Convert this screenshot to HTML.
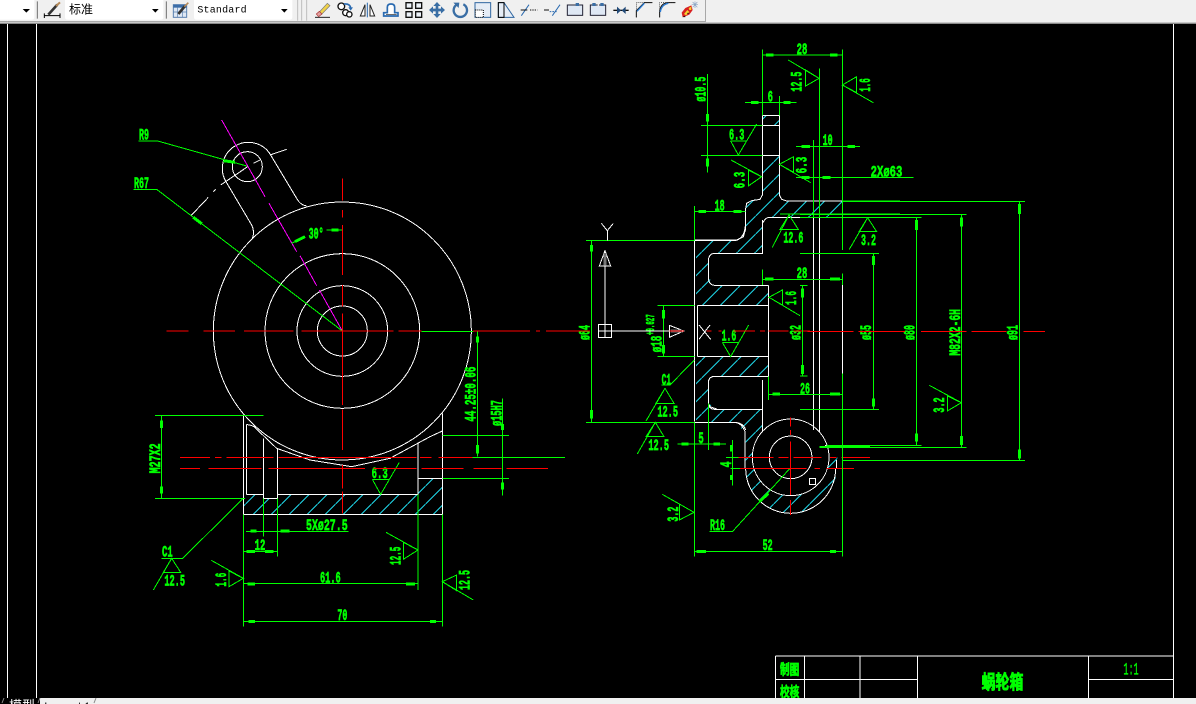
<!DOCTYPE html>
<html><head><meta charset="utf-8"><style>
html,body{margin:0;padding:0;background:#000;width:1196px;height:704px;overflow:hidden}
svg{display:block;position:absolute;left:0;top:0}
.w,.g,.r,.m,.a{fill:none;stroke-width:3;shape-rendering:crispEdges}
.w{stroke:#fff}.g{stroke:#0f0}.r{stroke:#f00}.m{stroke:#f0f}
.a{stroke:#0f0;stroke-width:9}
text{font-family:"Liberation Mono","Noto Sans CJK SC",monospace;font-weight:bold;font-size:46px;fill:#0f0;stroke:#0f0;stroke-width:2}
.cj{font-family:"Liberation Sans","Noto Sans CJK SC",sans-serif}
.ui{font-weight:normal;fill:#000;stroke:none}
</style></head><body>
<svg width="1196" height="704" viewBox="0 0 1196 704" xmlns="http://www.w3.org/2000/svg">
<defs>
<pattern id="h1" patternUnits="userSpaceOnUse" width="18" height="18" patternTransform="translate(11.6 0)"><path d="M0 18L18 0" stroke="#1fd8ea" stroke-width="1" shape-rendering="crispEdges"/></pattern>
<pattern id="h2" patternUnits="userSpaceOnUse" width="18" height="18" patternTransform="translate(-.3 0)"><path d="M0 18L18 0" stroke="#1fd8ea" stroke-width="1" shape-rendering="crispEdges"/></pattern>
</defs>
<rect width="1196" height="704" fill="#000"/>

<!-- hatching -->
<path fill="url(#h1)" d="M243 514.3V494.3H264V498.3H277V494.3H418V478.3H442.3V514.3Z"/>
<path fill="url(#h2)" d="M762 115H779V125H762ZM762 155H779V195L782 199 787 201H842V218H767L762 223V253H715L708 262V277L715 285H768V305.7H696V241H737L745 232V210L748 203 752 201 762 195Z"/>
<path fill="url(#h2)" d="M696 356H768V376H715L708 385V403L717 409H762V432A38.3 38.3 0 1 0 829 457.3L831 446H842L836.7 460V468.3A45 45 0 0 1 745.7 468.3V432L733 422H696Z"/>

<!-- Frame -->
<path d="M7.5 24V698M36.5 24V698M1173.5 24V698" stroke="#fff" fill="none" shape-rendering="crispEdges"/>

<!-- left view, top -->
<g transform="translate(120 110) scale(.33333)">
<circle class="w" cx="667" cy="663" r="387"/>
<circle class="w" cx="667" cy="663" r="232"/>
<circle class="w" cx="667" cy="663" r="136"/>
<circle class="w" cx="667" cy="663" r="75"/>
<path class="w" d="M318 215L395 345Q405 365 397 385M318 215A78 78 0 1 1 452 135L530 265Q540 285 560 288"/>
<circle class="w" cx="382" cy="170" r="45"/>
<path class="w" d="M213 317L265 262M280 245L287 238M302 225L383 170M400 160L420 150M450 135L500 118"/>
<path class="m" d="M305 30L435 260M447 280L530 425M540 437L590 527M598 540L667 663"/>
<path class="g" d="M55 93H113L380 168M40 238H110L667 663M515 400L555 380M620 360H667M905 664H1060M1073 665V750"/>
<path class="a" d="M310 152L345 157M220 322L245 341M525 395L555 380M635 360H655M1073 680V698"/>
<text x="57" y="88" textLength="30" lengthAdjust="spacingAndGlyphs">R9</text>
<text x="42" y="234" textLength="45" lengthAdjust="spacingAndGlyphs">R67</text>
<text x="566" y="385" textLength="45" lengthAdjust="spacingAndGlyphs">30°</text>
<path class="r" d="M140 663H205M250 663H345M372 663H520M545 663H820M835 663H905M1060 663H1110M667 205V272M667 300V322M667 345V495M667 525V590M667 610V750"/>
</g>

<!-- left view, bottom -->
<g transform="translate(130 350) scale(.33333)">
<path class="w" d="M349 224Q362 224 372 230L440 295 540 330 665 350 780 325 900 260 937 243"/>
<path class="w" d="M340 195V493M349 224V433M401 265V445M442 295V445M864 280V433M937 190V493M340 493H937M442 433H864M349 433H401M401 445H442M864 385H937"/>
<path class="g" d="M75 196H400M75 445H345M95 196V445M937 256H1137M937 385H1137M1117 145V437M1043 0V320M1027 322H1305M348 544H655M340 604H442M442 445V620M401 445V560M864 433V720M340 493V830M937 493V830M340 700H864M340 814H937"/>
<path class="a" d="M95 212V234M95 410V430M1117 222V240M1117 397V418M1043 285V310M362 543H380M452 543H478M350 604H375M405 604H430M352 702H375M828 702H855M355 814H375M900 814H918"/>
<path class="g" d="M727 388H778M727 388L752 433 808 337M768 547L864 600M820 577L864 600 820 628ZM244 631L340 685M297 663L340 685 297 710ZM937 695L980 675V722ZM937 695L1030 750M340 445L158 625H95M125 625L152 667H100ZM125 625L70 720"/>
<text x="103" y="707" textLength="62" lengthAdjust="spacingAndGlyphs">12.5</text>
<text x="96" y="620" textLength="32" lengthAdjust="spacingAndGlyphs">C1</text>
<text transform="translate(90 370) rotate(-90)" textLength="90" lengthAdjust="spacingAndGlyphs">M27X2</text>
<text transform="translate(1114 228) rotate(-90)" textLength="78" lengthAdjust="spacingAndGlyphs">ø15H7</text>
<text transform="translate(1037 215) rotate(-90)" textLength="165" lengthAdjust="spacingAndGlyphs">44.25±0.06</text>
<text x="725" y="384" textLength="48" lengthAdjust="spacingAndGlyphs">6.3</text>
<text x="528" y="540" textLength="125" lengthAdjust="spacingAndGlyphs">5Xø27.5</text>
<text x="374" y="600" textLength="32" lengthAdjust="spacingAndGlyphs">12</text>
<text x="570" y="697" textLength="62" lengthAdjust="spacingAndGlyphs">61.6</text>
<text x="622" y="810" textLength="30" lengthAdjust="spacingAndGlyphs">70</text>
<text transform="translate(812 645) rotate(-90)" textLength="55" lengthAdjust="spacingAndGlyphs">12.5</text>
<text transform="translate(288 710) rotate(-90)" textLength="42" lengthAdjust="spacingAndGlyphs">1.6</text>
<text transform="translate(1018 720) rotate(-90)" textLength="60" lengthAdjust="spacingAndGlyphs">12.5</text>
<path class="r" d="M150 322H240M255 322H275M290 322H430M445 322H860M870 322H905M925 322H1027M150 355H210M235 355H395M415 355H705M730 355H860M875 355H1000M1030 355H1115M1130 355H1254M637 0V165M637 178V300M637 345V415M637 425V490"/>
</g>

<!-- right view top -->
<g transform="translate(680 40) scale(.33333)">
<path class="w" d="M247 226V465M298 226V465M247 226H298M247 256H298M247 346H298M247 465L240 478 215 482 200 490 196 510V570L190 590 170 600H43V630M298 465L305 478 320 483H487M262 533H487M247 630V550L255 538 262 533M400 533V1170M418 533V1175"/>
<path class="g" d="M247 45H487M247 28V226M487 28V630M195 187H350M298 168V226M82 102V397M63 256H247M63 346H247M418 85V533M400 300V533M348 320H540M348 412H700M43 515H196M43 498V600M487 483H660M300 522H660M487 533H660M0 602H43"/>
<path class="a" d="M258 45H280M450 45H472M213 187H235M310 187H332M82 222V245M82 355V380M365 320H390M502 320H525M365 412H388M428 412H452M55 515H78M160 515H185"/>
<path class="g" d="M152 303H200M152 303L175 345 230 252M245 410L205 390V438ZM153 360L245 410M298 373L341 350V397ZM298 373L392 428M325 60L417 115M377 90L417 115 377 138ZM487 135L530 110V158ZM487 135L580 188M327 525L355 568H300ZM327 525L277 622M563 533L590 575H537ZM563 533L508 628"/>
<text x="350" y="42" textLength="32" lengthAdjust="spacingAndGlyphs">28</text>
<text x="263" y="184" textLength="16" lengthAdjust="spacingAndGlyphs">6</text>
<text transform="translate(76 185) rotate(-90)" textLength="75" lengthAdjust="spacingAndGlyphs">ø10.5</text>
<text x="147" y="298" textLength="46" lengthAdjust="spacingAndGlyphs">6.3</text>
<text transform="translate(194 445) rotate(-90)" textLength="50" lengthAdjust="spacingAndGlyphs">6.3</text>
<text transform="translate(380 400) rotate(-90)" textLength="50" lengthAdjust="spacingAndGlyphs">6.3</text>
<text transform="translate(365 155) rotate(-90)" textLength="60" lengthAdjust="spacingAndGlyphs">12.5</text>
<text transform="translate(570 155) rotate(-90)" textLength="40" lengthAdjust="spacingAndGlyphs">1.6</text>
<text x="428" y="315" textLength="30" lengthAdjust="spacingAndGlyphs">10</text>
<text x="572" y="410" textLength="95" lengthAdjust="spacingAndGlyphs">2Xø63</text>
<text x="104" y="512" textLength="30" lengthAdjust="spacingAndGlyphs">18</text>
<text x="310" y="607" textLength="60" lengthAdjust="spacingAndGlyphs">12.6</text>
<text x="543" y="615" textLength="45" lengthAdjust="spacingAndGlyphs">3.2</text>
</g>

<!-- right view middle + UCS -->
<g transform="translate(580 220) scale(.33333)">
<path class="w" d="M343 62V605M352 257V409M343 62H460Q497 62 497 0M547 0V100H405Q385 100 385 125V170Q385 196 405 196H565M352 257H565M352 409H565M405 469H565M565 196V469M405 469Q385 469 385 490V545Q385 568 405 568H547V630M343 607H460Q490 607 497 630"/>
<path class="g" d="M343 0V62M18 62H343M18 607H343M35 62V607M232 257H343M232 409H343M250 257V409M547 148V195M547 178H700M565 469V540M565 523H690M667 196V469M567 232L607 210V255ZM567 232L660 287M427 367H477M427 367L452 410 506 315M343 420L270 495H245M255 505L282 550H228ZM255 505L198 603"/>
<path class="a" d="M35 75V95M35 570V595M250 270V295M250 375V400M555 177H580M578 522H600M667 435V460"/>
<text transform="translate(28 360) rotate(-90)" textLength="45" lengthAdjust="spacingAndGlyphs">ø64</text>
<text transform="translate(245 397) rotate(-90)" textLength="50" lengthAdjust="spacingAndGlyphs">ø18</text>
<text transform="translate(222 345) rotate(-90)" textLength="62" lengthAdjust="spacingAndGlyphs" style="font-size:36px">+0.027</text>
<text x="245" y="494" textLength="28" lengthAdjust="spacingAndGlyphs">C1</text>
<text x="232" y="590" textLength="62" lengthAdjust="spacingAndGlyphs">12.5</text>
<text x="425" y="362" textLength="44" lengthAdjust="spacingAndGlyphs">1.6</text>
<text x="650" y="174" textLength="32" lengthAdjust="spacingAndGlyphs">28</text>
<text x="660" y="520" textLength="30" lengthAdjust="spacingAndGlyphs">26</text>
<text transform="translate(648 255) rotate(-90)" textLength="42" lengthAdjust="spacingAndGlyphs">1.6</text>
<text transform="translate(662 360) rotate(-90)" textLength="45" lengthAdjust="spacingAndGlyphs">ø32</text>
<path class="r" d="M268 333H312M380 333H395M415 333H425M460 333H525M540 333H555M565 333H625M640 333H690"/>
<path class="w" d="M55 313H95V353H55ZM75 313V138M75 313V353M55 333H268M64 10L82 32 100 10M82 32V62M357 315L392 358M390 315L357 358"/>
<path class="w" d="M58 138L75 92 92 138ZM268 316L312 333 268 352Z"/>
<path d="M75 102V136" stroke="#777" stroke-width="9" fill="none"/>
<path d="M272 333H306" stroke="#777" stroke-width="9" fill="none"/>
<path class="r" d="M268 333H312"/>
</g>

<!-- worm area -->
<g transform="translate(630 380) scale(.33333)">
<path class="w" d="M193 127H310Q335 127 345 155V265M235 0V70L240 80 262 88H397M397 0V155M551 0V135M569 0V155M585 197H637M620 240V265"/>
<circle class="w" cx="482" cy="232" r="115"/>
<circle class="w" cx="482" cy="232" r="64"/>
<path class="w" d="M347 265A135 135 0 0 0 617 265"/>
<rect class="w" x="538" y="296" width="18" height="18"/>
<path class="g" d="M0 127H193M193 127V530M193 514H637M142 192H288M235 70V210M288 232H325M302 265H330M307 180V317M238 454H308L480 265M192 397L148 372V420ZM97 343L192 397M76 127L102 170H48ZM76 127L22 222M637 0V60M637 170V530M568 200H720M637 242H720"/>
<path class="a" d="M200 514H228M600 514H618M155 192H175M250 192H270M305 195V215M305 285V300M388 365L415 340"/>
<text x="55" y="210" textLength="62" lengthAdjust="spacingAndGlyphs">12.5</text>
<text x="205" y="189" textLength="16" lengthAdjust="spacingAndGlyphs">5</text>
<text transform="translate(303 262) rotate(-90)" textLength="18" lengthAdjust="spacingAndGlyphs">4</text>
<text x="240" y="450" textLength="45" lengthAdjust="spacingAndGlyphs">R16</text>
<text transform="translate(144 425) rotate(-90)" textLength="45" lengthAdjust="spacingAndGlyphs">3.2</text>
<text x="398" y="510" textLength="30" lengthAdjust="spacingAndGlyphs">52</text>
<path class="r" d="M325 232H430M445 232H475M490 232H575M600 232H620M635 232H720M330 265H530M553 265H570M590 265H672M482 112V140M482 150V165M482 185V345M482 360V405"/>
</g>

<!-- right dims -->
<g transform="translate(800 190) scale(.33333)">
<path class="w" d="M128 282V550"/>
<path class="g" d="M127 0V34M127 34H675M0 73H500M0 82H365M658 34V811M127 811H675M484 73V772M58 772H500M349 82V766M80 766H365M0 190H237M0 658H237M220 190V658M0 268H127M127 250V285M0 613H127M127 550V870M7 286V560M0 286H23M0 558H23M484 638L442 618V663ZM388 586L484 638"/>
<path class="a" d="M658 42V72M658 778V805M484 82V110M484 738V765M349 90V120M349 730V755M220 198V225M220 625V650M90 267H120M90 612H120M7 295V322M7 525V552"/>
<text transform="translate(213 450) rotate(-90)" textLength="45" lengthAdjust="spacingAndGlyphs">ø55</text>
<text transform="translate(343 450) rotate(-90)" textLength="45" lengthAdjust="spacingAndGlyphs">ø80</text>
<text transform="translate(480 497) rotate(-90)" textLength="140" lengthAdjust="spacingAndGlyphs">M82X2-6H</text>
<text transform="translate(652 450) rotate(-90)" textLength="45" lengthAdjust="spacingAndGlyphs">ø91</text>
<text transform="translate(432 668) rotate(-90)" textLength="46" lengthAdjust="spacingAndGlyphs">3.2</text>
<path class="r" d="M22 424H160M175 424H315M363 424H500M515 424H620M670 424H735"/>
</g>

<!-- extended centerline between views -->
<path d="M473 331H530M536 331H540M546 331H590" stroke="#f00" stroke-width="1" fill="none" shape-rendering="crispEdges"/>

<!-- title block -->
<g transform="translate(760 640) scale(.33333)">
<path class="w" d="M46 48H1240M46 118H472M985 118H1240M46 48V174M133 48V174M300 48V174M472 48V174M985 48V174"/>
<text class="cj" transform="translate(60 104) scale(1 1.45)" style="font-size:29px;stroke-width:1.5" textLength="58" lengthAdjust="spacingAndGlyphs">制图</text>
<text class="cj" transform="translate(60 171) scale(1 1.45)" style="font-size:29px;stroke-width:1.5" textLength="58" lengthAdjust="spacingAndGlyphs">校核</text>
<text class="cj" transform="translate(665 145) scale(1 1.35)" style="font-size:42px;stroke-width:2" textLength="125" lengthAdjust="spacingAndGlyphs">蜗轮箱</text>
<text x="1090" y="103" textLength="46" lengthAdjust="spacingAndGlyphs" style="font-size:52px;font-weight:normal;stroke-width:1">1:1</text>
</g>

<!-- bottom tabs -->
<rect x="0" y="698" width="1196" height="6" fill="#f0f0f0"/>
<rect x="0" y="698" width="40" height="6" fill="#000"/>
<path d="M2 703L4 698M38 703L40 698M94 703L96 698" stroke="#888" fill="none"/>
<text class="cj ui" x="9" y="710" style="font-size:13px;fill:#fff">模型</text>
<text class="ui" x="44" y="710" style="font-size:11px">Layout1</text>

<!-- toolbar -->
<rect x="0" y="0" width="1196" height="24" fill="#f0f0f0"/>
<rect x="0" y="23" width="1196" height="1" fill="#8a8a8a"/>
<rect x="0" y="22" width="1196" height="1" fill="#c8c8c8"/>
<rect x="0" y="21" width="705" height="1" fill="#a8a8a8"/>
<rect x="705" y="0" width="1" height="22" fill="#a8a8a8"/>
<g transform="scale(.33333)">
<rect x="-6" y="-6" width="109" height="65" rx="7" fill="#fff"/>
<rect x="195" y="-6" width="295" height="65" rx="7" fill="#fff"/>
<rect x="582" y="-6" width="295" height="65" rx="7" fill="#fff"/>
<path d="M68 27H90L79 38ZM456 27H476L466 38ZM843 27H863L853 38Z" fill="#000"/>
<path d="M112 4V56M499 4V56" stroke="#6f6f6f" stroke-width="3" fill="none"/>
<path d="M893 0V62M905 0V62M920 0V62" stroke="#bdbdbd" stroke-width="3" fill="none"/>
<text class="cj ui" x="207" y="41" style="font-size:36px">标准</text>
<text class="ui" x="592" y="37" style="font-size:30px" textLength="148" lengthAdjust="spacing">Standard</text>
<!-- dim style -->
<path d="M133 40V54M180 40V54M133 47H180" stroke="#000" stroke-width="3" fill="none"/>
<path d="M145 44L172 14" stroke="#333" stroke-width="8"/><path d="M168 18L180 7" stroke="#b58a5a" stroke-width="6"/>
<!-- table style -->
<rect x="520" y="14" width="40" height="38" fill="#dfe8f4" stroke="#5a80b0" stroke-width="3"/>
<rect x="520" y="14" width="40" height="9" fill="#3c6ea8"/>
<path d="M533 23V52M547 23V52M520 36H560" stroke="#5a80b0" stroke-width="2"/>
<path d="M535 42L555 18" stroke="#333" stroke-width="8"/><path d="M553 20L565 8" stroke="#b58a5a" stroke-width="5"/>
<!-- erase -->
<path d="M945 52H990" stroke="#222" stroke-width="3"/>
<path d="M958 36L982 10 990 17 964 44Z" fill="#f0d24a" stroke="#777" stroke-width="2"/>
<path d="M949 42L958 34 966 42 956 50Z" fill="#e4a0a0" stroke="#a33" stroke-width="2"/>
<!-- copy -->
<circle cx="1024" cy="19" r="10" fill="#fff" stroke="#111" stroke-width="4"/>
<circle cx="1037" cy="38" r="9" fill="#fff" stroke="#111" stroke-width="4"/>
<circle cx="1048" cy="43" r="8" fill="#fff" stroke="#111" stroke-width="4"/>
<path d="M1032 12Q1050 10 1052 24" fill="none" stroke="#2a6ab0" stroke-width="5"/><path d="M1045 22H1059L1052 32Z" fill="#2a6ab0"/>
<!-- mirror -->
<path d="M1095 14V48H1081ZM1110 14V48H1124Z" fill="#fff" stroke="#222" stroke-width="3"/>
<path d="M1102 8V52" stroke="#2a6ab0" stroke-width="3"/>
<!-- offset -->
<path d="M1151 48V38H1162V22Q1162 12 1173 12Q1184 12 1184 22V38H1194V48Z" fill="#fff" stroke="#2a6ab0" stroke-width="5"/>
<path d="M1158 44H1190" stroke="#222" stroke-width="2"/>
</g>
<g transform="translate(400 0) scale(.33333)">
<!-- array -->
<path d="M18 8H36V25H18ZM47 8H65V25H47ZM18 35H36V52H18ZM47 35H65V52H47Z" fill="#eef3fa" stroke="#111" stroke-width="4"/>
<!-- move -->
<path d="M111 6L122 18H115V26H123V19L135 30 123 41V34H115V42H122L111 54 100 42H107V34H99V41L87 30 99 19V26H107V18H100Z" fill="#3a6ea5"/>
<!-- rotate -->
<path d="M172 13A20 20 0 1 0 190 13" fill="none" stroke="#3a6ea5" stroke-width="7"/>
<path d="M160 8L178 8 176 24Z" fill="#3a6ea5"/>
<!-- scale -->
<rect x="225" y="8" width="47" height="44" fill="#e6edf6" stroke="#2f66a0" stroke-width="3"/>
<rect x="226" y="30" width="24" height="22" fill="#fff" stroke="#000" stroke-width="3" stroke-dasharray="3 3"/>
<!-- stretch -->
<path d="M295 8H312L342 52H295Z" fill="#e6edf6" stroke="#2f66a0" stroke-width="3"/>
<path d="M295 8H312V52H295Z" fill="none" stroke="#000" stroke-width="3"/>
<!-- trim -->
<path d="M364 47L387 14" stroke="#2a6ab0" stroke-width="3"/>
<path d="M362 30H382" stroke="#111" stroke-width="3"/><path d="M390 30H412" stroke="#111" stroke-width="3" stroke-dasharray="4 3"/>
<!-- extend -->
<path d="M457 47L480 14" stroke="#2a6ab0" stroke-width="3"/>
<path d="M432 30H447" stroke="#111" stroke-width="3"/><path d="M449 35H470" stroke="#2a6ab0" stroke-width="3" stroke-dasharray="5 3"/>
<!-- break -->
<rect x="502" y="15" width="46" height="31" fill="#dfe8f4" stroke="#223" stroke-width="3"/>
<rect x="527" y="9" width="10" height="9" fill="#3a6ea5"/>
<rect x="571" y="15" width="46" height="31" fill="#dfe8f4" stroke="#223" stroke-width="3"/>
<path d="M593 13H597V19H593Z" fill="#f0f0f0"/>
<rect x="577" y="9" width="10" height="9" fill="#3a6ea5"/><rect x="601" y="9" width="10" height="9" fill="#3a6ea5"/>
<!-- join -->
<path d="M640 31H686" stroke="#111" stroke-width="4"/>
<path d="M651 20L663 31 651 42ZM677 20L665 31 677 42Z" fill="#224a78"/>
<!-- chamfer -->
<path d="M709 52V32L733 8H757" fill="none" stroke="#111" stroke-width="3"/>
<path d="M709 52V8H757" fill="none" stroke="#111" stroke-width="2" stroke-dasharray="3 3"/>
<path d="M711 34L733 10" stroke="#2a7ad0" stroke-width="4"/>
<!-- fillet -->
<path d="M779 52V36Q781 10 803 8H826" fill="none" stroke="#111" stroke-width="3"/>
<path d="M779 52V8H826" fill="none" stroke="#111" stroke-width="2" stroke-dasharray="3 3"/>
<path d="M781 36Q784 14 805 10" fill="none" stroke="#2a7ad0" stroke-width="4"/>
<!-- explode -->
<path d="M848 52L845 38 856 24 874 16 878 30 868 44Z" fill="#d82020"/>
<path d="M852 42L862 30 868 36 858 46ZM866 24L874 20 874 30 868 30Z" fill="#f4d030"/>
<path d="M850 50H856M862 40H866" stroke="#111" stroke-width="3"/>
<path d="M878 6L892 22M892 6L878 22M885 4V24M875 14H894" stroke="#8aa4c4" stroke-width="2"/>
</g>
</svg>
</body></html>
